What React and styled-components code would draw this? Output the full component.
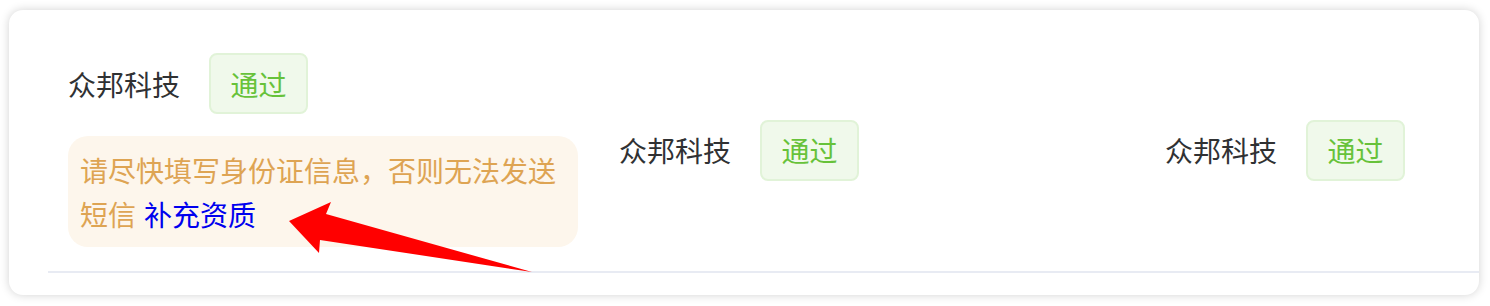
import React from 'react';
import styled, { createGlobalStyle } from 'styled-components';

const GlobalStyle = createGlobalStyle`
  html, body {
    margin: 0;
    padding: 0;
    background: #ffffff;
  }
  body {
    font-family: "Noto Sans CJK SC", "Noto Sans", sans-serif;
  }
`;

const Page = styled.div`
  position: relative;
  width: 1490px;
  height: 306px;
  padding: 10px 11px 11px 9px;
  box-sizing: border-box;
`;

const Card = styled.div`
  height: 100%;
  background: #ffffff;
  border-radius: 14px;
  box-shadow: 0 0 10px rgba(0, 0, 0, 0.18);
  padding: 43px 0 0 39px;
  box-sizing: border-box;
  overflow: hidden;
`;

const Row = styled.div`
  display: grid;
  grid-template-columns: 551px 546px auto;
  align-items: center;
  padding: 0 0 24px 20px;
  border-bottom: 2px solid #e8ebf3;
`;

const Column = styled.div`
  display: flex;
  flex-direction: column;
  align-items: flex-start;
  gap: 22px;
`;

const Entry = styled.div`
  display: flex;
  align-items: center;
`;

const Name = styled.span`
  font-size: 28px;
  line-height: 40px;
  color: #303133;
  margin-right: 29px;
`;

const Tag = styled.span`
  display: inline-flex;
  align-items: center;
  height: 61px;
  padding: 0 19.5px;
  box-sizing: border-box;
  font-size: 28px;
  color: #67c23a;
  background: #f0f9eb;
  border: 2px solid #e1f3d8;
  border-radius: 8px;
`;

const Notice = styled.div`
  width: 510px;
  box-sizing: border-box;
  padding: 12px 22px 11px 12px;
  background: #fdf6ec;
  border-radius: 20px;
  font-size: 28px;
  line-height: 44px;
  color: #dea453;
`;

const Link = styled.a`
  color: #0000ee;
  text-decoration: none;
  margin-left: 8px;
`;

const Annotation = styled.svg`
  position: absolute;
  left: 0;
  top: 0;
  pointer-events: none;
`;

const companies = ['众邦科技', '众邦科技', '众邦科技'];

function CompanyEntry({ name }) {
  return (
    <Entry>
      <Name>{name}</Name>
      <Tag>通过</Tag>
    </Entry>
  );
}

export default function App() {
  return (
    <>
      <GlobalStyle />
      <Page>
        <Card>
          <Row>
            <Column>
              <CompanyEntry name={companies[0]} />
              <Notice>
                请尽快填写身份证信息，否则无法发送短信
                <Link href="#">补充资质</Link>
              </Notice>
            </Column>
            <CompanyEntry name={companies[1]} />
            <CompanyEntry name={companies[2]} />
          </Row>
        </Card>
        <Annotation width="1490" height="306" viewBox="0 0 1490 306">
          <polygon
            points="289,221 331,202 326,214 532,272 320,240 319,253"
            fill="#ff0000"
          />
        </Annotation>
      </Page>
    </>
  );
}
